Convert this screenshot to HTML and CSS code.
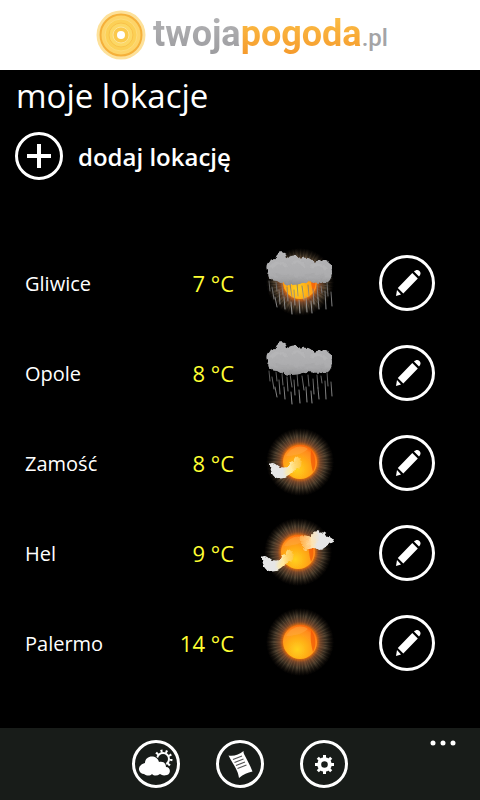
FILE: index.html
```html
<!DOCTYPE html>
<html lang="pl">
<head>
    <meta charset="UTF-8">
    <meta name="viewport" content="width=device-width, initial-scale=1.0">
    <title>twojapogoda.pl - moje lokacje</title>
    <link rel="stylesheet" href="styles.css">
</head>
<body>

    <!-- Shared shapes for the weather icons -->
    <svg class="defs" width="0" height="0" aria-hidden="true">
        <defs>
            <radialGradient id="halo">
                <stop offset="0.5" stop-color="#ff7a10" stop-opacity="0.85"/>
                <stop offset="0.6" stop-color="#a0603a" stop-opacity="0.7"/>
                <stop offset="0.78" stop-color="#7a6448" stop-opacity="0.4"/>
                <stop offset="1" stop-color="#403020" stop-opacity="0"/>
            </radialGradient>
            <radialGradient id="rays" gradientUnits="userSpaceOnUse" cx="50" cy="42" r="34">
                <stop offset="0.5" stop-color="#ff9040" stop-opacity="0.1"/>
                <stop offset="0.75" stop-color="#c8a880" stop-opacity="0.18"/>
                <stop offset="1" stop-color="#a08060" stop-opacity="0"/>
            </radialGradient>
            <radialGradient id="disc" cx="0.42" cy="0.72" r="0.75">
                <stop offset="0" stop-color="#ffd21c"/>
                <stop offset="0.45" stop-color="#ffab18"/>
                <stop offset="0.8" stop-color="#ff8a1c"/>
                <stop offset="1" stop-color="#f86008"/>
            </radialGradient>
            <linearGradient id="cloudFill" x1="0" y1="0" x2="0" y2="1">
                <stop offset="0" stop-color="#b4b4b6"/>
                <stop offset="0.75" stop-color="#acacae"/>
                <stop offset="1" stop-color="#909092"/>
            </linearGradient>
            <linearGradient id="wispFill" x1="0" y1="0" x2="1" y2="0">
                <stop offset="0.4" stop-color="#e6e6e6"/>
                <stop offset="0.65" stop-color="#ffe9a0"/>
                <stop offset="1" stop-color="#ffc850" stop-opacity="0.7"/>
            </linearGradient>
            <linearGradient id="puffFill" x1="0" y1="0" x2="1" y2="0">
                <stop offset="0" stop-color="#ffc060" stop-opacity="0.6"/>
                <stop offset="0.35" stop-color="#ffe4b0"/>
                <stop offset="0.55" stop-color="#e6e6e6"/>
            </linearGradient>
            <linearGradient id="drop" gradientUnits="userSpaceOnUse" x1="0" y1="40" x2="0" y2="74">
                <stop offset="0" stop-color="#666"/>
                <stop offset="1" stop-color="#bbb"/>
            </linearGradient>
            <filter id="soft" x="-20%" y="-20%" width="140%" height="140%">
                <feGaussianBlur stdDeviation="0.6"/>
            </filter>
            <filter id="fluffy" x="-20%" y="-20%" width="140%" height="140%" color-interpolation-filters="sRGB">
                <feTurbulence type="fractalNoise" baseFrequency="0.2" numOctaves="2" seed="4"/>
                <feDisplacementMap in="SourceGraphic" scale="4" xChannelSelector="R" yChannelSelector="G"/>
                <feGaussianBlur stdDeviation="0.7"/>
            </filter>

            <symbol id="sun" viewBox="0 0 100 90">
                <circle cx="50" cy="42" r="34" fill="url(#halo)"/>
                <circle cx="50" cy="42" r="25" fill="none" stroke="url(#rays)" stroke-width="18" stroke-dasharray="1 2 1 1 2 2"/>
                <circle cx="50" cy="42" r="17" fill="url(#disc)" filter="url(#soft)"/>
                <path d="M61 30c5 6 6 15 2 22-2-7-3-14-2-22z" fill="#f04c00" opacity="0.6" filter="url(#soft)"/>
                <path d="M36 36c5-9 15-12 22-7-6 5-14 7-22 7z" fill="#ffb04c" opacity="0.4" filter="url(#soft)"/>
            </symbol>
            <symbol id="cloud" viewBox="0 0 100 90">
                <g filter="url(#fluffy)">
                    <path d="M26 19c-2-8 11-10 11 0 4-5 11-4 14 0 6-3 10 0 13 3 8-3 16-1 17 4 2 6 1 13-3 16-9 1-14 1-22 0-10 4-21 4-28-1-7 0-13-3-10-9-4-6 0-13 8-13z" fill="url(#cloudFill)"/>
                    <path d="M21 27c6-6 12-5 15 0M43 23c5-3 10 0 11 4M61 27c5-4 12-2 15 3" fill="none" stroke="#ccc" stroke-width="3" opacity="0.2"/>
                    <path d="M25 34c7 5 15 1 21 4M55 36c8-3 12 2 20 0" fill="none" stroke="#999" stroke-width="3" opacity="0.2"/>
                </g>
            </symbol>
            <symbol id="rain" viewBox="0 0 100 90">
                <path d="M19 41l1 10M22 47l2 12M26 42l1 9M25 57l2 10M29 50l1 14M32 44l1 11M34 57l1 12M37 47l1 14M40 44l2 13M41 62l1 12M44 50l1 15M47 43l1 13M49 60l1 13M52 46l2 14M56 57l1 15M58 45l1 11M61 61l1 12M63 49l1 15M67 45l1 13M68 58l1 11M71 46l1 7M75 51l1 18M77 42l1 14M81 52l1 14" fill="none" stroke="url(#drop)" stroke-width="1" stroke-linecap="round" opacity="0.8"/>
            </symbol>
            <symbol id="wisp" viewBox="0 0 40 26">
                <path d="M3 8c3-2 6 0 9 3 3 0 5 2 8 0 4-2 4-6 8-6 2-5 6-6 7-3 3 3 1 5 1 8-2 4-6 3-8 6-3 1-4 4-7 5-4 4-10 3-13 0-3-3-5-7-5-13z" fill="url(#wispFill)" filter="url(#fluffy)"/>
            </symbol>
            <symbol id="puff" viewBox="0 0 40 26">
                <path d="M4 7c4-2 8 0 11 1 2-6 7-7 10-4 3-2 6 1 7 4 3 0 5 2 6 4-3 2-5 2-6 5-4 1-5 4-9 4-4-3-7-1-10-1-3 2-7 1-6-4-3-2-4-6-3-9z" fill="url(#puffFill)" filter="url(#fluffy)"/>
            </symbol>
            <symbol id="pencil" viewBox="0 0 56 56">
                <path d="M33.300 18l5.500 5.500-14.500 15-5.500-5.500zM35 16.500c2-2 4-2 5.500-.500s1.500 3.500-.500 5.500zM18 35l4 4.500-5 1.500z" fill="#fff"/>
            </symbol>
        </defs>
    </svg>

    <header class="header">
        <svg class="logo-mark" viewBox="0 0 50 50" aria-hidden="true">
            <circle cx="25" cy="25" r="24.500" fill="#fde19a"/>
            <circle cx="25" cy="25" r="20.500" fill="#fdd468" stroke="#f5b03a" stroke-width="2"/>
            <circle cx="25" cy="25" r="16" fill="#fcd056" stroke="#fddc7c" stroke-width="1"/>
            <circle cx="25" cy="25" r="12" fill="#fcd865" stroke="#f9c24a" stroke-width="1"/>
            <circle cx="25" cy="25" r="8" fill="#fbc94c" stroke="#fde397" stroke-width="1"/>
            <circle cx="25" cy="25" r="4" fill="#fff"/>
        </svg>
        <div class="logo-text"><span class="logo-gray">twoja</span><span class="logo-orange">pogoda</span><span class="logo-domain">.pl</span></div>
    </header>

    <main class="content">
        <h1>moje lokacje</h1>
        <button type="button" class="add-button">
            <span class="circle">
                <svg viewBox="0 0 48 48" aria-hidden="true"><path d="M24 12v24M12 24h24" stroke="#fff" stroke-width="4"/></svg>
            </span>
            dodaj lokację
        </button>

        <ul class="locations">
            <li class="location">
                <span class="city">Gliwice</span>
                <span class="temp">7 °C</span>
                <svg class="weather" viewBox="0 -2 100 90" role="img" aria-label="Deszcz i słońce">
                    <use href="#sun" width="100" height="90"/>
                    <use href="#rain" width="100" height="90"/>
                    <use href="#cloud" width="100" height="90"/>
                </svg>
                <button type="button" class="circle edit-button" aria-label="Edytuj Gliwice"><svg viewBox="0 0 56 56"><use href="#pencil"/></svg></button>
            </li>
            <li class="location">
                <span class="city">Opole</span>
                <span class="temp">8 °C</span>
                <svg class="weather" viewBox="0 -2 100 90" role="img" aria-label="Deszcz">
                    <use href="#rain" width="100" height="90"/>
                    <use href="#cloud" width="100" height="90"/>
                </svg>
                <button type="button" class="circle edit-button" aria-label="Edytuj Opole"><svg viewBox="0 0 56 56"><use href="#pencil"/></svg></button>
            </li>
            <li class="location">
                <span class="city">Zamość</span>
                <span class="temp">8 °C</span>
                <svg class="weather" viewBox="0 -2 100 90" role="img" aria-label="Prawie bezchmurnie">
                    <use href="#sun" width="100" height="90"/>
                    <use href="#wisp" x="17" y="36" width="38" height="25"/>
                </svg>
                <button type="button" class="circle edit-button" aria-label="Edytuj Zamość"><svg viewBox="0 0 56 56"><use href="#pencil"/></svg></button>
            </li>
            <li class="location">
                <span class="city">Hel</span>
                <span class="temp">9 °C</span>
                <svg class="weather" viewBox="0 -2 100 90" role="img" aria-label="Małe zachmurzenie">
                    <use href="#sun" x="-2" width="100" height="90"/>
                    <use href="#wisp" x="9" y="39" width="38" height="25"/>
                    <use href="#puff" x="46" y="19" width="40" height="26"/>
                </svg>
                <button type="button" class="circle edit-button" aria-label="Edytuj Hel"><svg viewBox="0 0 56 56"><use href="#pencil"/></svg></button>
            </li>
            <li class="location">
                <span class="city">Palermo</span>
                <span class="temp">14 °C</span>
                <svg class="weather" viewBox="0 -2 100 90" role="img" aria-label="Słonecznie">
                    <use href="#sun" width="100" height="90"/>
                </svg>
                <button type="button" class="circle edit-button" aria-label="Edytuj Palermo"><svg viewBox="0 0 56 56"><use href="#pencil"/></svg></button>
            </li>
        </ul>
    </main>

    <footer class="app-bar">
        <div></div>
        <nav class="app-buttons">
            <button type="button" class="circle" aria-label="Pogoda">
                <svg viewBox="0 0 48 48">
                    <circle cx="31" cy="19" r="8" fill="none" stroke="#fff" stroke-width="3" stroke-dasharray="2 3"/>
                    <circle cx="31" cy="19" r="6" fill="#181c19" stroke="#fff" stroke-width="2"/>
                    <path d="M12 34a5 5 0 0 1-3-9c1-1 3-2 4-2 0-8 12-9 14-1 4-1 7 1 7 5 5 0 5 7 1 8-4 1-5 0-7-1-3 2-6 2-8 0-2 2-5 2-8 0z" fill="#fff" stroke="#181c19" stroke-width="2" paint-order="stroke"/>
                </svg>
            </button>
            <button type="button" class="circle" aria-label="Wiadomości">
                <svg viewBox="0 0 48 48">
                    <path d="M12.500 15.500c5 1 11-1 15-4.500 0 1 0 2 .500 3 3 6 6 11 8.500 17.500-5 1-9 2.500-13.500 6.500-.500-3-1-5-2-7-2-5-6-10-8.500-15.500z" fill="#fff"/>
                    <path d="M17 19.500l9-3.500M18.500 22.500l9-3.500M20 25.500l9-3.500M21.500 28.500l9-3.500" stroke="#555" stroke-width="1.200"/>
                </svg>
            </button>
            <button type="button" class="circle" aria-label="Ustawienia">
                <svg viewBox="0 0 48 48">
                    <circle cx="24.500" cy="24.500" r="5.300" fill="none" stroke="#fff" stroke-width="4"/>
                    <path d="M24.500 15v4M24.500 30v4M15 24.500h4M30 24.500h4M17.800 17.800l3 3M28.200 28.200l3 3M31.200 17.800l-3 3M20.800 28.200l-3 3" stroke="#fff" stroke-width="3"/>
                </svg>
            </button>
        </nav>
        <button type="button" class="more-button" aria-label="Więcej">
            <svg viewBox="0 0 26 6"><g fill="#fff"><circle cx="3" cy="3" r="2.500"/><circle cx="13" cy="3" r="2.500"/><circle cx="23" cy="3" r="2.500"/></g></svg>
        </button>
    </footer>

</body>
</html>
```
FILE: styles.css
```css
/* Reset and Body Styling */
* {
    margin: 0;
    padding: 0;
    box-sizing: border-box;
}
body {
    font-family: 'Open Sans', 'Noto Sans', sans-serif;
    background-color: #000000;
    color: #ffffff;
    display: flex;
    flex-direction: column;
    min-height: 100vh;
}
button {
    background: none;
    border: none;
    color: inherit;
    font-family: inherit;
    cursor: pointer;
}
.defs {
    position: absolute;
}

/* Header */
.header {
    display: flex;
    justify-content: center;
    align-items: center;
    gap: 7px;
    height: 70px;
    padding-left: 4px;
    background-color: #ffffff;
}
.logo-mark {
    width: 50px;
    height: 50px;
}
.logo-text {
    padding-top: 2px;
    font-family: Roboto, sans-serif;
    font-size: 36px;
    line-height: 48px;
    font-weight: bold;
}
.logo-gray,
.logo-orange {
    background: linear-gradient(#b4b4b6, #9c9c9f);
    background-clip: text;
    -webkit-background-clip: text;
    color: transparent;
}
.logo-orange {
    background-image: linear-gradient(#fcc148, #f59a2c);
}
.logo-domain {
    font-size: 24px;
    font-weight: 500;
    color: #a4a4a6;
}

/* Content */
.content {
    flex: 1;
}
h1 {
    padding: 0 16px;
    font-size: 33px;
    line-height: 52px;
    font-weight: normal;
}
.circle {
    display: block;
    flex: none;
    width: 48px;
    height: 48px;
    border: 3px solid #ffffff;
    border-radius: 50%;
}
.circle svg {
    display: block;
    width: 48px;
    height: 48px;
    margin: -3px;
}
.add-button {
    display: flex;
    align-items: center;
    gap: 15px;
    margin-top: 10px;
    padding: 0 15px;
    font-size: 24px;
    font-weight: 600;
}

/* Locations */
.locations {
    margin-top: 58px;
    padding: 0 45px 0 25px;
    list-style: none;
}
.location {
    display: grid;
    grid-template-columns: 1fr 80px 145px 56px;
    align-items: center;
    height: 90px;
}
.city {
    font-size: 20px;
}
.temp {
    font-size: 22px;
    text-align: right;
    color: #ffff33;
}
.weather {
    width: 100px;
    height: 90px;
    margin-left: 16px;
}
.circle.edit-button,
.edit-button svg {
    width: 56px;
    height: 56px;
}

/* App Bar */
.app-bar {
    display: grid;
    grid-template-columns: 1fr auto 1fr;
    align-items: center;
    height: 72px;
    background-color: #181c19;
}
.app-buttons {
    display: flex;
    gap: 36px;
}
.more-button {
    justify-self: end;
    align-self: start;
    padding: 12px 24px;
}
.more-button svg {
    display: block;
    width: 26px;
    height: 6px;
}
```
